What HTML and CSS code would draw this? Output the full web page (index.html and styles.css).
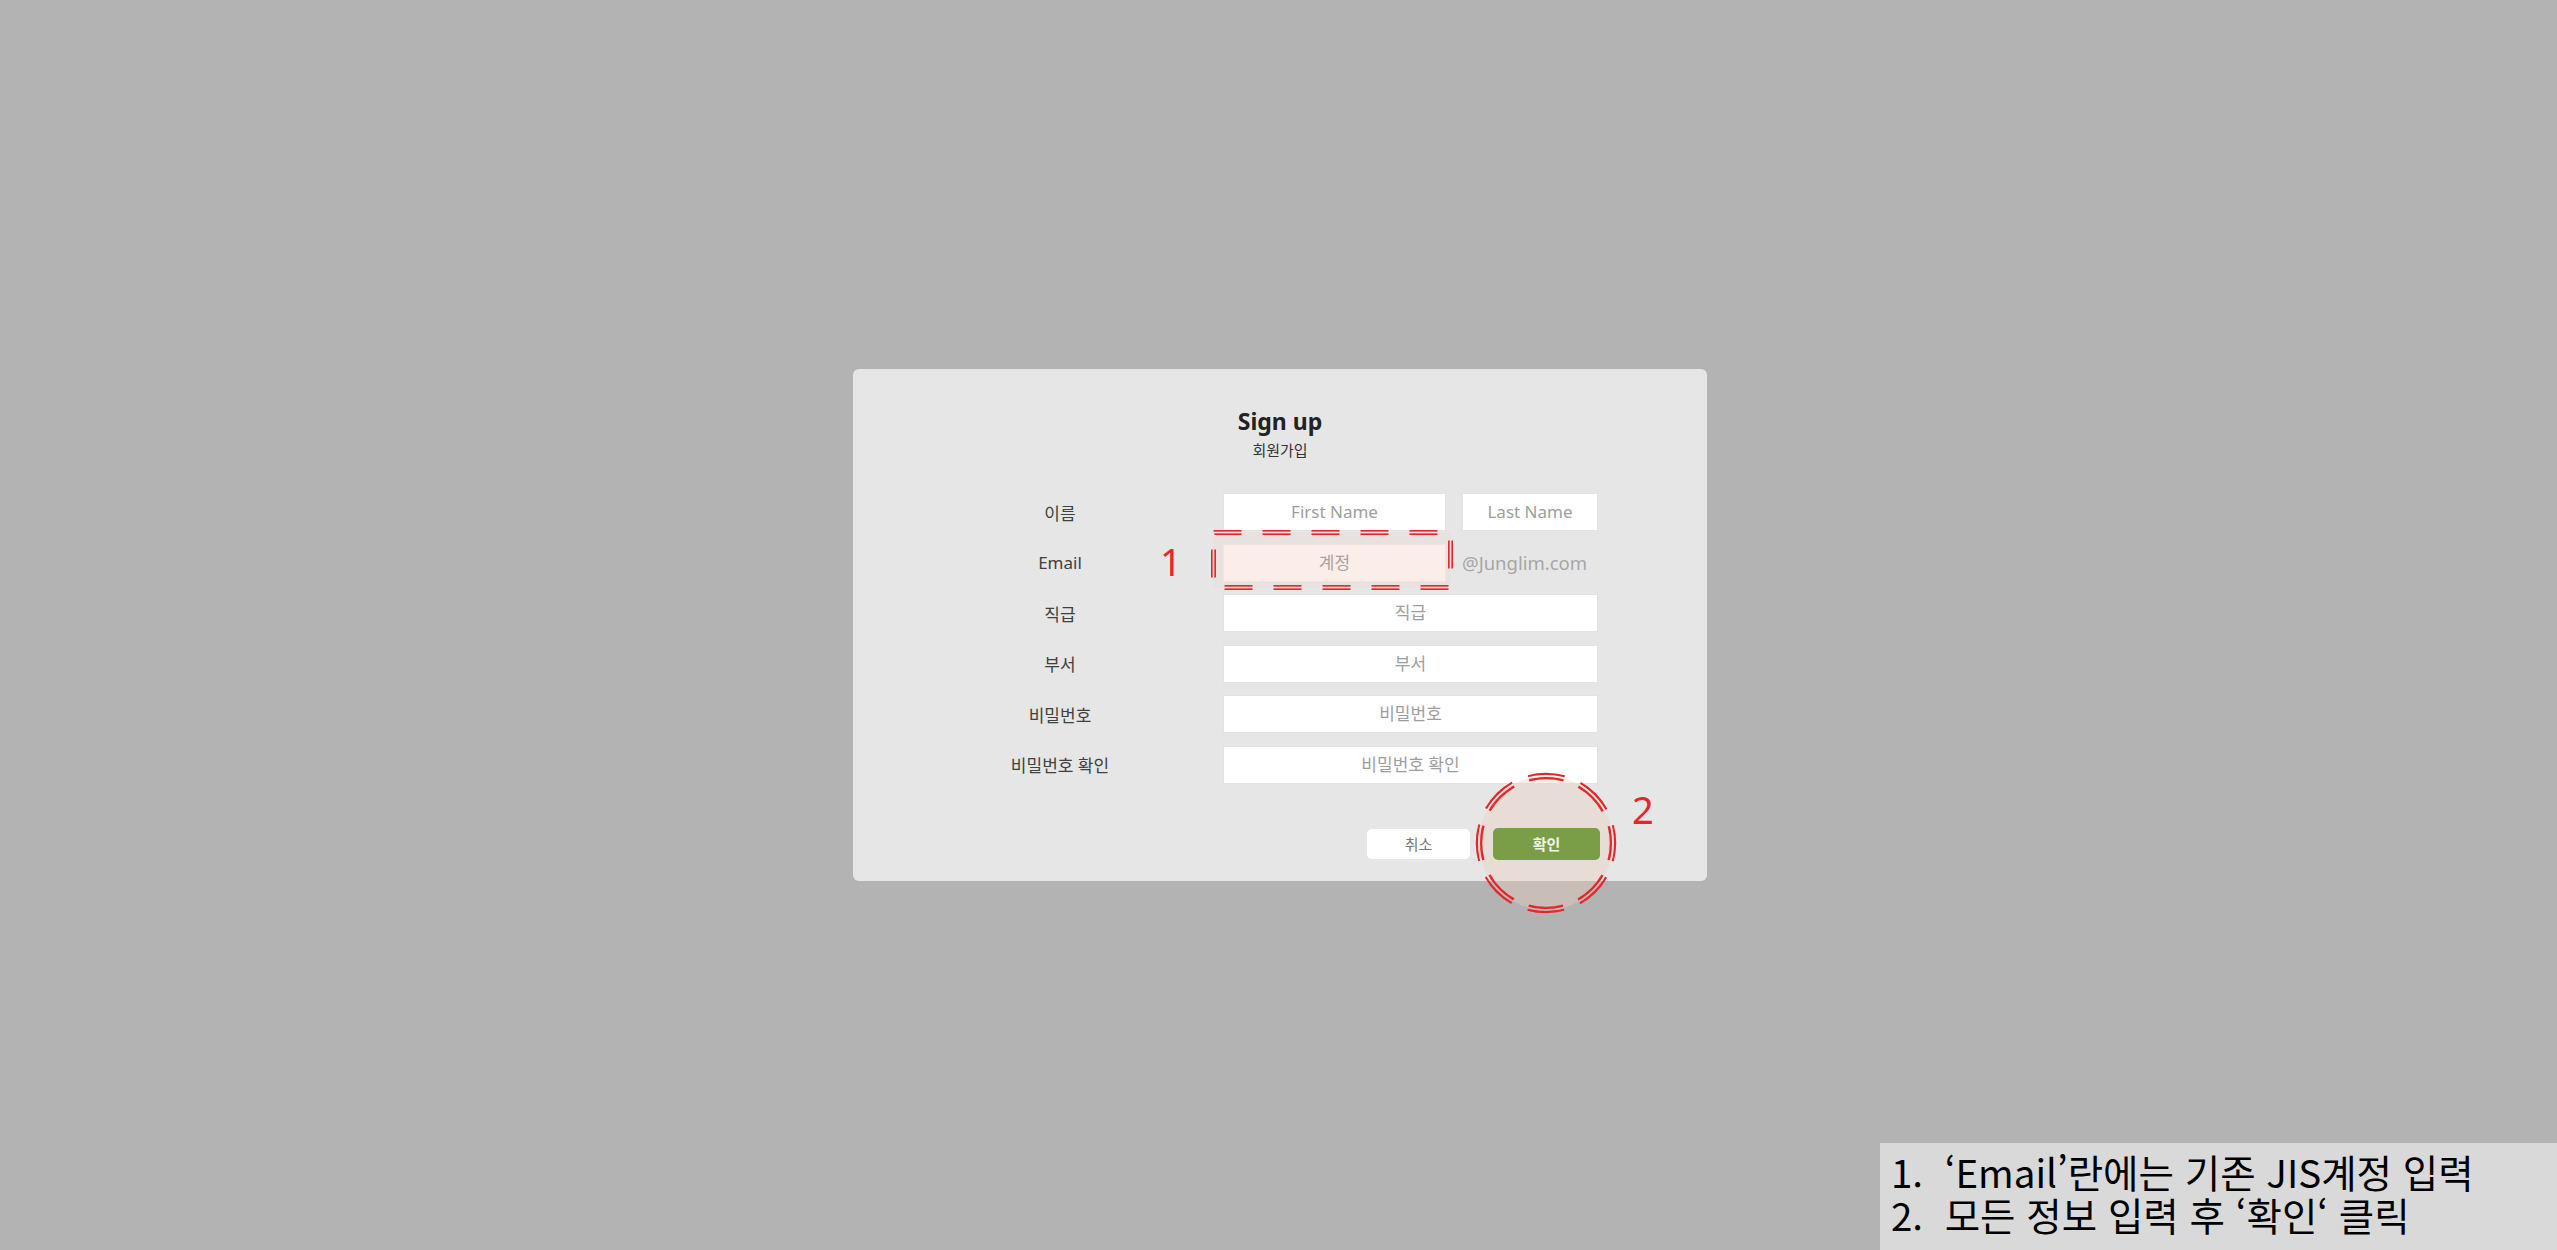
FILE: index.html
```html
<!DOCTYPE html>
<html lang="ko">
<head>
<meta charset="utf-8">
<title>Sign up</title>
<link rel="stylesheet" href="styles.css">
</head>
<body>
<div class="stage">
  <div class="dialog">
    <div class="head">
      <h1 class="title">Sign up</h1>
      <p class="subtitle">회원가입</p>
    </div>
    <div class="form">
      <div class="lbl">이름</div>
      <div class="field">
        <div class="input w-first">First Name</div>
        <div class="input w-last">Last Name</div>
      </div>
      <div class="lbl">Email</div>
      <div class="field">
        <div class="input w-first highlight">계정</div>
        <span class="domain">@Junglim.com</span>
      </div>
      <div class="lbl">직급</div>
      <div class="field"><div class="input w-full">직급</div></div>
      <div class="lbl">부서</div>
      <div class="field"><div class="input w-full">부서</div></div>
      <div class="lbl">비밀번호</div>
      <div class="field"><div class="input w-full">비밀번호</div></div>
      <div class="lbl">비밀번호 확인</div>
      <div class="field"><div class="input w-full">비밀번호 확인</div></div>
    </div>
    <div class="actions">
      <button class="btn cancel">취소</button>
      <button class="btn ok">확인</button>
    </div>
  </div>
</div>

<div class="anno-num n1">1</div>
<svg class="anno-rect" width="246" height="64" viewBox="0 0 246 64">
  <defs>
    <mask id="mrect" maskUnits="userSpaceOnUse" x="0" y="0" width="246" height="64">
      <rect x="4.5" y="4.5" width="237" height="55" fill="none" stroke="#fff" stroke-width="5" stroke-dasharray="28 21"/>
      <rect x="4.5" y="4.5" width="237" height="55" fill="none" stroke="#000" stroke-width="1.7"/>
    </mask>
  </defs>
  <rect x="4.5" y="4.5" width="237" height="55" fill="rgba(240,190,175,0.12)"/>
  <rect x="0" y="0" width="246" height="64" fill="#e5262b" mask="url(#mrect)"/>
</svg>

<svg class="anno-circle" width="152" height="152" viewBox="0 0 152 152">
  <defs>
    <mask id="mcirc" maskUnits="userSpaceOnUse" x="0" y="0" width="152" height="152">
      <circle cx="76" cy="76" r="67" fill="none" stroke="#fff" stroke-width="6.5" stroke-dasharray="36 16.6" stroke-dashoffset="18"/>
      <circle cx="76" cy="76" r="67" fill="none" stroke="#000" stroke-width="2"/>
    </mask>
  </defs>
  <circle cx="76" cy="76" r="67" fill="rgba(235,208,188,0.38)"/>
  <rect x="0" y="0" width="152" height="152" fill="#e5262b" mask="url(#mcirc)"/>
</svg>
<div class="anno-num n2">2</div>

<div class="note">
  <p class="note-line">1.&nbsp; ‘Email’란에는 기존 JIS계정 입력</p>
  <p class="note-line">2.&nbsp; 모든 정보 입력 후 ‘확인‘ 클릭</p>
</div>
</body>
</html>
```

FILE: styles.css
```css
* { box-sizing: border-box; }

html, body {
  margin: 0;
  padding: 0;
  height: 100%;
}

body {
  background: #b3b3b3;
  font-family: "Noto Sans", "Noto Sans CJK KR", sans-serif;
  overflow: hidden;
  position: relative;
}

.stage {
  height: 1250px;
  display: flex;
  align-items: center;
  justify-content: center;
  padding-left: 3px;
}

.dialog {
  width: 854px;
  height: 512px;
  background: #e6e6e6;
  border-radius: 6px;
  padding-top: 37px;
  display: flex;
  flex-direction: column;
}

.head {
  text-align: center;
}

.title {
  margin: 0;
  font-size: 23px;
  line-height: 31px;
  font-weight: 700;
  color: #222;
}

.subtitle {
  margin: 3px 0 0;
  font-size: 15px;
  line-height: 20px;
  color: #333;
}

.form {
  margin-top: 33px;
  margin-left: 87px;
  display: grid;
  grid-template-columns: 240px 375px;
  grid-auto-rows: 38px;
  column-gap: 43px;
  row-gap: 12.5px;
}

.lbl {
  display: flex;
  align-items: center;
  justify-content: center;
  font-size: 17px;
  color: #404040;
  overflow: hidden;
}

.field {
  display: flex;
  align-items: center;
  gap: 16px;
}

.input {
  height: 38px;
  background: #fff;
  border: 1px solid #e2e2e2;
  display: flex;
  align-items: center;
  justify-content: center;
  font-size: 17px;
  line-height: 24px;
  color: #9e9e9e;
  overflow: hidden;
}

.w-first { width: 223px; }
.w-last { width: 136px; }
.w-full { width: 375px; }

.highlight {
  background: #fdf5f2;
  border-color: #f3ebe8;
}

.domain {
  font-size: 18.5px;
  color: #a6a6a6;
}

.actions {
  margin-top: 44px;
  padding-right: 107px;
  display: flex;
  justify-content: flex-end;
  align-items: center;
  gap: 23px;
}

.btn {
  font-family: "Noto Sans", "Noto Sans CJK KR", sans-serif;
  font-size: 15px;
  border: none;
  border-radius: 5px;
  padding: 0;
  position: relative;
  z-index: 2;
}

.btn.cancel {
  width: 103px;
  height: 30px;
  background: #fff;
  color: #777;
}

.btn.ok {
  width: 107px;
  height: 32px;
  background: #7a9e48;
  color: #f0f4e8;
  font-weight: 700;
}

.anno-num {
  position: absolute;
  font-family: "Noto Sans", sans-serif;
  font-size: 38px;
  line-height: 38px;
  color: #e5262b;
  z-index: 3;
}

.n1 { left: 1160px; top: 542px; }
.n2 { left: 1632px; top: 790px; }

.anno-rect {
  position: absolute;
  left: 1209px;
  top: 528px;
  z-index: 3;
}

.anno-circle {
  position: absolute;
  left: 1470px;
  top: 767px;
  z-index: 1;
}

.note {
  position: absolute;
  right: 0;
  bottom: 0;
  width: 677px;
  height: 107px;
  background: #d9d9d9;
  padding: 7px 0 0 11px;
  z-index: 3;
}

.note-line {
  margin: 0;
  font-family: "Noto Sans CJK KR", sans-serif;
  font-size: 38.5px;
  line-height: 43px;
  height: 43px;
  color: #000;
  white-space: nowrap;
}
```
